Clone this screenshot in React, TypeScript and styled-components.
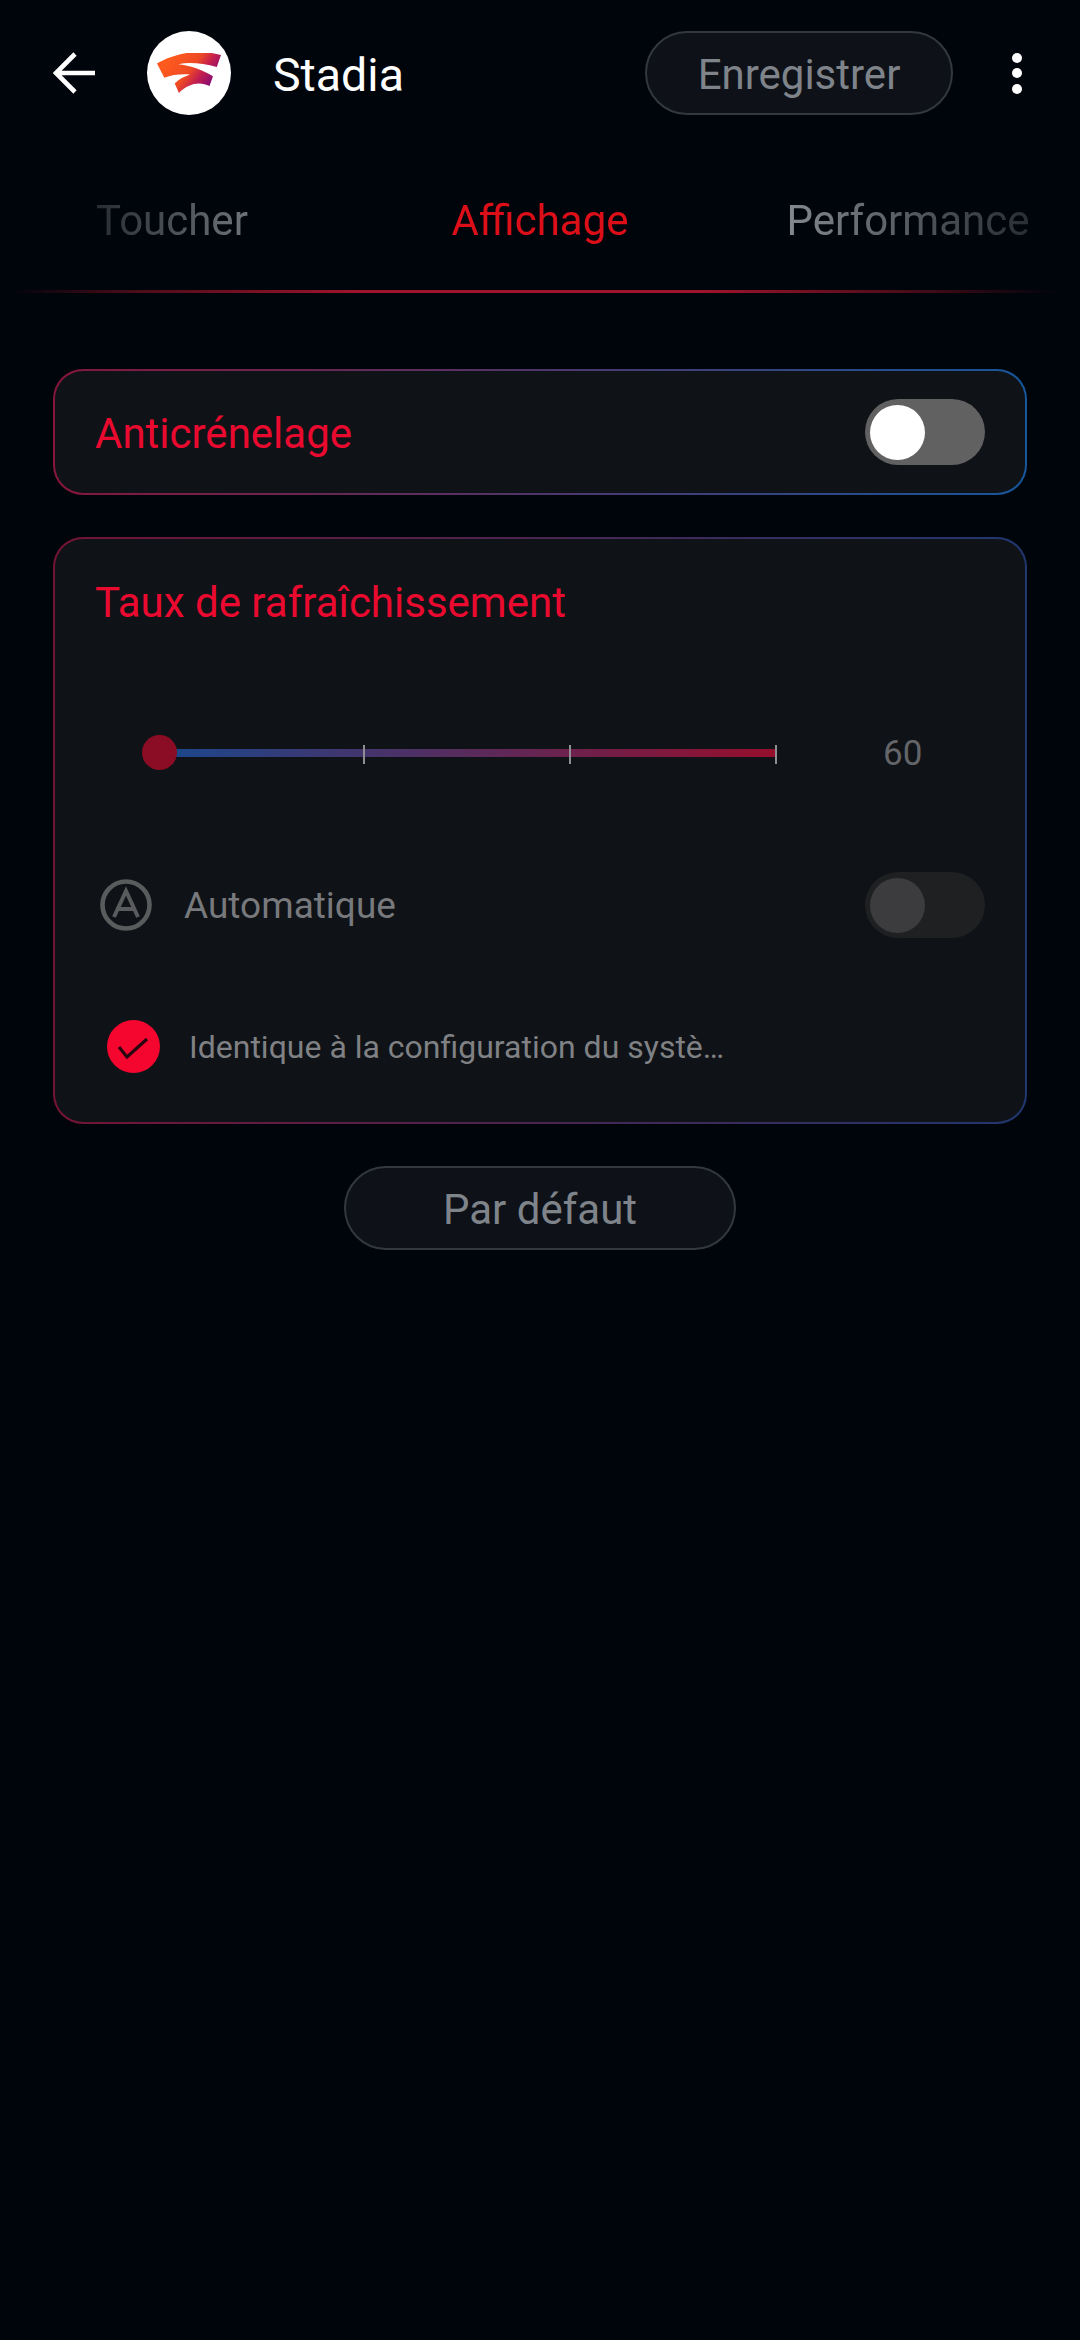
import React from "react";
import styled, { createGlobalStyle } from "styled-components";

const Global = createGlobalStyle`
  html, body { margin: 0; padding: 0; background: #00040b; }
  body { font-family: Roboto, "Liberation Sans", sans-serif; }
`;

const Page = styled.div`
  width: 1080px;
  height: 2340px;
  background: #00040b;
  overflow: hidden;
  display: flex;
  flex-direction: column;
`;

const Header = styled.header`
  display: flex;
  align-items: center;
  height: 84px;
  margin-top: 31px;
  padding-left: 53px;
`;

const BackIcon = styled.svg`
  width: 42px;
  height: 42px;
  flex: none;
  margin-right: 52px;
`;

const AppLogo = styled.div`
  width: 84px;
  height: 84px;
  flex: none;
  border-radius: 50%;
  background: #fff;
  display: flex;
  align-items: center;
  justify-content: center;
  margin-right: 42px;
`;

const AppTitle = styled.h1`
  margin: 0;
  padding-top: 3px;
  font-size: 46.5px;
  font-weight: 400;
  color: #fff;
  flex: 1;
`;

const Pill = styled.button<{ $width: number }>`
  width: ${(p) => p.$width}px;
  height: 84px;
  flex: none;
  box-sizing: border-box;
  padding: 3px 0 0;
  border-radius: 42px;
  border: 2px solid #33383f;
  background: #0e1218;
  color: #7f848b;
  font-family: inherit;
  font-size: 42px;
  font-weight: 400;
  text-align: center;
`;

const MoreDots = styled.div`
  width: 127px;
  flex: none;
  display: flex;
  flex-direction: column;
  align-items: center;
  gap: 5.5px;
`;

const Dot = styled.span`
  width: 10px;
  height: 10px;
  border-radius: 50%;
  background: #fff;
`;

const Tabs = styled.nav`
  display: flex;
  justify-content: center;
  align-items: center;
  height: 175px;
  box-sizing: border-box;
  padding-top: 35px;
  mask-image: linear-gradient(
    90deg,
    rgba(0, 0, 0, 0.3) 97px,
    #000 300px,
    #000 780px,
    rgba(0, 0, 0, 0.3) 1029px
  );
`;

const Tab = styled.div<{ $active?: boolean }>`
  flex: 0 0 368px;
  text-align: center;
  font-size: 42px;
  color: ${(p) => (p.$active ? "#dc0f19" : "#878b92")};
`;

const TabLine = styled.div`
  height: 3px;
  flex: none;
  background: linear-gradient(
    90deg,
    transparent 10px,
    #4e0d1b 140px,
    #a0142c 360px,
    #a0142c 700px,
    #4e0d1b 900px,
    transparent 1060px
  );
`;

const Content = styled.main`
  display: flex;
  flex-direction: column;
  align-items: center;
  padding: 76px 53px 0;
  gap: 42px;
`;

const Card = styled.section<{ $from: string; $to: string }>`
  width: 100%;
  box-sizing: border-box;
  border: 2px solid transparent;
  border-radius: 30px;
  background:
    linear-gradient(#0f1216, #0f1216) padding-box,
    linear-gradient(90deg, ${(p) => p.$from}, ${(p) => p.$to}) border-box;
`;

const SwitchRow = styled.div`
  display: flex;
  align-items: center;
  justify-content: space-between;
  height: 122px;
  padding: 0 40px 0 40px;
`;

const RedLabel = styled.h2<{ $nudge?: boolean }>`
  margin: 0;
  padding-top: ${(p) => (p.$nudge ? "3px" : "0")};
  font-size: 42px;
  font-weight: 400;
  color: #ea0a30;
`;

const RefreshCard = styled.div`
  height: 583px;
  box-sizing: border-box;
  padding: 39px 40px 0 40px;
  display: flex;
  flex-direction: column;
`;

const SliderRow = styled.div`
  display: flex;
  align-items: center;
  margin-top: 106px;
  height: 40px;
  padding-left: 48px;
`;

const Track = styled.div`
  position: relative;
  width: 634px;
  height: 8px;
  flex: none;
  background: linear-gradient(90deg, #17498f, #960e2c);
`;

const Thumb = styled.span`
  position: absolute;
  left: -1px;
  top: -14px;
  width: 35px;
  height: 35px;
  border-radius: 50%;
  background: #8a0d25;
`;

const Tick = styled.span<{ $left: number }>`
  position: absolute;
  left: ${(p) => p.$left}px;
  top: -4px;
  width: 2px;
  height: 19px;
  background: #8f8f93;
`;

const SliderValue = styled.span`
  margin-left: 106px;
  font-size: 35px;
  color: #646568;
`;

const AutoRow = styled.div`
  display: flex;
  align-items: center;
  justify-content: space-between;
  margin-top: 99px;
  height: 66px;
`;

const AutoLabelGroup = styled.div`
  display: flex;
  align-items: center;
  margin-left: 5px;
  gap: 32px;
`;

const AutoText = styled.span`
  font-size: 37px;
  color: #77797c;
`;

const CheckRow = styled.div`
  display: flex;
  align-items: center;
  gap: 29px;
  margin-top: 82px;
  margin-left: 12px;
`;

const CheckMark = styled.span`
  width: 53px;
  height: 53px;
  flex: none;
  border-radius: 50%;
  background: #f5062f;
  display: flex;
`;

const CheckText = styled.span`
  font-size: 32px;
  color: #7f8184;
`;

const SwitchTrack = styled.div<{ $dim?: boolean }>`
  width: 120px;
  height: 66px;
  flex: none;
  border-radius: 33px;
  background: ${(p) => (p.$dim ? "#1f2022" : "#616161")};
  display: flex;
  align-items: center;
  padding-left: 5px;
  box-sizing: border-box;
`;

const SwitchKnob = styled.span<{ $dim?: boolean }>`
  width: 55px;
  height: 55px;
  border-radius: 50%;
  background: ${(p) => (p.$dim ? "#3c3c3e" : "#ffffff")};
`;

function StadiaLogo() {
  return (
    <svg width="64" height="40" viewBox="17 30 184 115" aria-hidden="true">
      <defs>
        <linearGradient id="stadia" x1="60" y1="40" x2="175" y2="125" gradientUnits="userSpaceOnUse">
          <stop offset="0" stopColor="#ff5a1e" />
          <stop offset="0.45" stopColor="#ee4a24" />
          <stop offset="0.68" stopColor="#c41f4e" />
          <stop offset="1" stopColor="#7e0a78" />
        </linearGradient>
      </defs>
      <path
        fill="url(#stadia)"
        d="M17 60C60 35 130 15 201 36L189 70C150 60 110 55 78 62C110 65 150 78 178 97L168 125C140 110 105 118 80 145L68 118C80 105 95 98 112 92C85 90 60 93 38 101Z"
      />
    </svg>
  );
}

export default function App() {
  return (
    <Page>
      <Global />
      <Header>
        <BackIcon viewBox="0 0 42 42" fill="none" stroke="#fff" strokeWidth="4.6">
          <path d="M42 21H3M22 2L3 21l19 19" />
        </BackIcon>
        <AppLogo>
          <StadiaLogo />
        </AppLogo>
        <AppTitle>Stadia</AppTitle>
        <Pill $width={308}>Enregistrer</Pill>
        <MoreDots>
          <Dot />
          <Dot />
          <Dot />
        </MoreDots>
      </Header>
      <Tabs>
        <Tab>Toucher</Tab>
        <Tab $active>Affichage</Tab>
        <Tab>Performance</Tab>
      </Tabs>
      <TabLine />
      <Content>
        <Card $from="#86163a" $to="#17569a">
          <SwitchRow>
            <RedLabel $nudge>Anticrénelage</RedLabel>
            <SwitchTrack>
              <SwitchKnob />
            </SwitchTrack>
          </SwitchRow>
        </Card>
        <Card $from="#741434" $to="#20376f">
          <RefreshCard>
            <RedLabel>Taux de rafraîchissement</RedLabel>
            <SliderRow>
              <Track>
                <Tick $left={220} />
                <Tick $left={426} />
                <Tick $left={632} />
                <Thumb />
              </Track>
              <SliderValue>60</SliderValue>
            </SliderRow>
            <AutoRow>
              <AutoLabelGroup>
                <svg width="52" height="52" viewBox="0 0 52 52" fill="none" stroke="#5a5b5d" strokeWidth="4.6">
                  <circle cx="26" cy="26" r="23.5" />
                  <path strokeWidth="4" d="M14 38L26 12l12 26M18 30h16" />
                </svg>
                <AutoText>Automatique</AutoText>
              </AutoLabelGroup>
              <SwitchTrack $dim>
                <SwitchKnob $dim />
              </SwitchTrack>
            </AutoRow>
            <CheckRow>
              <CheckMark>
                <svg width="53" height="53" viewBox="0 0 53 53" fill="none" stroke="#2a0610" strokeWidth="3.2">
                  <path d="M12 27l8 10 20-18" />
                </svg>
              </CheckMark>
              <CheckText>Identique à la configuration du systè…</CheckText>
            </CheckRow>
          </RefreshCard>
        </Card>
        <Pill $width={392}>Par défaut</Pill>
      </Content>
    </Page>
  );
}
